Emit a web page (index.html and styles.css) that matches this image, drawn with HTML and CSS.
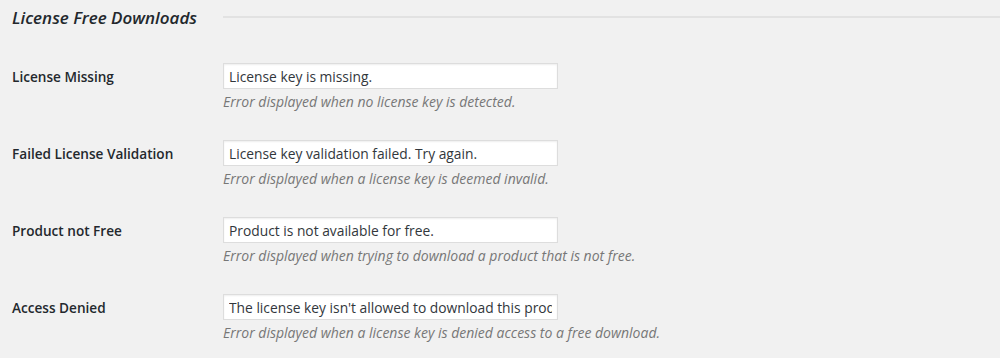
FILE: index.html
```html
<!DOCTYPE html>
<html>
<head>
    <title>License Free Downloads</title>
    <link rel="stylesheet" href="styles.css">
</head>
<body>
    <div class="section-header">
        <h2>License Free Downloads</h2>
        <hr>
    </div>
    <div class="form-table">
        <div class="row">
            <label for="missing">License Missing</label>
            <div class="field">
                <input type="text" id="missing" value="License key is missing.">
                <p class="description">Error displayed when no license key is detected.</p>
            </div>
        </div>
        <div class="row">
            <label for="failed">Failed License Validation</label>
            <div class="field">
                <input type="text" id="failed" value="License key validation failed. Try again.">
                <p class="description">Error displayed when a license key is deemed invalid.</p>
            </div>
        </div>
        <div class="row">
            <label for="notfree">Product not Free</label>
            <div class="field">
                <input type="text" id="notfree" value="Product is not available for free.">
                <p class="description">Error displayed when trying to download a product that is not free.</p>
            </div>
        </div>
        <div class="row">
            <label for="denied">Access Denied</label>
            <div class="field">
                <input type="text" id="denied" value="The license key isn't allowed to download this product.">
                <p class="description">Error displayed when a license key is denied access to a free download.</p>
            </div>
        </div>
    </div>
</body>
</html>
```

FILE: styles.css
```css
body {
    margin: 0;
    padding: 0 0 0 12px;
    background-color: #f1f1f1;
    color: #23282d;
    font-family: "Open Sans", sans-serif;
    font-size: 13px;
}
.section-header {
    display: flex;
    align-items: center;
    height: 34px;
}
.section-header h2 {
    width: 211px;
    margin: 0;
    font-size: 17px;
    font-style: italic;
    font-weight: 600;
    color: #23282d;
}
.section-header hr {
    flex: 1;
    margin: 0;
    border: none;
    border-top: 2px solid #e2e2e2;
}
.form-table {
    padding-top: 29px;
}
.row {
    display: flex;
    height: 77px;
}
.row label {
    width: 211px;
    padding-top: 4px;
    font-size: 13.6px;
    font-weight: 600;
    color: #23282d;
}
.field input {
    box-sizing: border-box;
    width: 335px;
    height: 26px;
    margin: 0;
    padding: 2px 5px;
    border: 1px solid #ddd;
    box-shadow: inset 0 1px 2px rgba(0, 0, 0, 0.07);
    background-color: #fff;
    color: #32373c;
    font-family: "Open Sans", sans-serif;
    font-size: 13.8px;
}
.description {
    margin: 3px 0 0;
    font-style: italic;
    font-size: 14px;
    color: #777;
}
```
